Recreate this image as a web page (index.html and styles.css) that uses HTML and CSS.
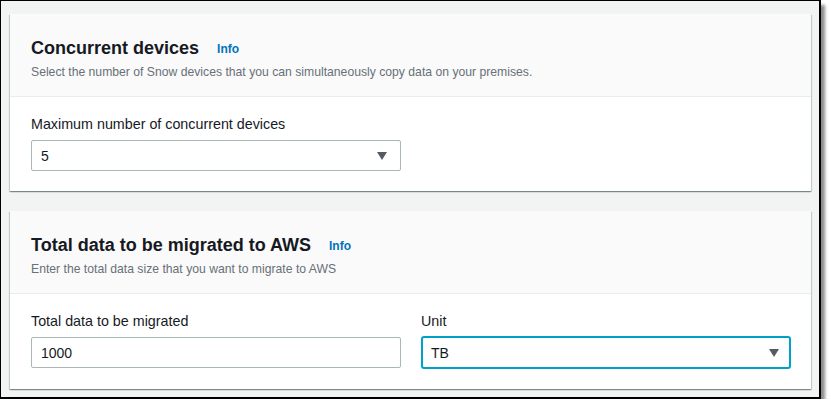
FILE: index.html
```html
<!DOCTYPE html>
<html lang="en">

<head>
    <meta charset="UTF-8">
    <title>Snow devices - data migration</title>
    <link rel="stylesheet" href="styles.css">
</head>

<body>
    <div class="marco">
        <div class="tarjeta">
            <div class="cabecera">
                <h2>Concurrent devices <a href="#" class="info">Info</a></h2>
                <p class="descripcion">Select the number of Snow devices that you can simultaneously copy data on your premises.</p>
            </div>
            <div class="cuerpo">
                <div class="campo ancho">
                    <label>Maximum number of concurrent devices</label>
                    <div class="caja">
                        <span>5</span>
                        <span class="flecha"></span>
                    </div>
                </div>
            </div>
        </div>

        <div class="tarjeta">
            <div class="cabecera">
                <h2>Total data to be migrated to AWS <a href="#" class="info">Info</a></h2>
                <p class="descripcion">Enter the total data size that you want to migrate to AWS</p>
            </div>
            <div class="cuerpo fila">
                <div class="campo ancho">
                    <label>Total data to be migrated</label>
                    <div class="caja">
                        <span>1000</span>
                    </div>
                </div>
                <div class="campo ancho">
                    <label>Unit</label>
                    <div class="caja activa">
                        <span>TB</span>
                        <span class="flecha"></span>
                    </div>
                </div>
            </div>
        </div>
    </div>
</body>

</html>
```

FILE: styles.css
```css
body {
    margin: 0;
    background-color: #ffffff;
    font-family: "Liberation Sans", Arial, sans-serif;
    color: #16191f;
}

.marco {
    width: 821px;
    height: 399px;
    box-sizing: border-box;
    border: 1px solid #000000;
    border-right-width: 2px;
    border-bottom-width: 2px;
    background-color: #f2f3f3;
    padding: 13px 0 0 9px;
    display: flex;
    flex-direction: column;
    gap: 20px;
    box-shadow: 4px 5px 3px rgba(0, 0, 0, 0.45);
}

.tarjeta {
    width: 801px;
    background-color: #ffffff;
    box-shadow: 0 1px 1px 0 rgba(0, 28, 36, 0.3), 1px 1px 1px 0 rgba(0, 28, 36, 0.15), -1px 1px 1px 0 rgba(0, 28, 36, 0.15);
}

.cabecera {
    background-color: #fafafa;
    border-bottom: 1px solid #eaeded;
    padding: 21px 20px 17px 21px;
    height: 83px;
    box-sizing: border-box;
}

h2 {
    margin: 0;
    font-size: 18px;
    line-height: 26px;
    font-weight: bold;
}

.info {
    font-size: 12px;
    color: #0073bb;
    text-decoration: none;
    margin-left: 13px;
    vertical-align: 1px;
}

.descripcion {
    margin: 1px 0 0;
    font-size: 12.2px;
    line-height: 18px;
    color: #687078;
}

.cuerpo {
    padding: 16px 20px 20px 21px;
}

.fila {
    display: flex;
    gap: 20px;
}

.campo {
    display: flex;
    flex-direction: column;
    gap: 5px;
}

.ancho {
    width: 370px;
}

label {
    font-size: 14.3px;
    line-height: 22px;
}

.caja {
    height: 31px;
    box-sizing: border-box;
    border: 1px solid #aab7b8;
    border-radius: 2px;
    padding: 0 13px 0 9px;
    display: flex;
    justify-content: space-between;
    align-items: center;
    font-size: 14px;
}

.caja.activa {
    height: 33px;
    margin-top: -1px;
    border: 2px solid #00a1c9;
    border-radius: 3px;
    padding: 0 10px 0 8px;
}

.flecha {
    width: 0;
    height: 0;
    border-left: 5px solid transparent;
    border-right: 5px solid transparent;
    border-top: 8px solid #545b64;
}
```
